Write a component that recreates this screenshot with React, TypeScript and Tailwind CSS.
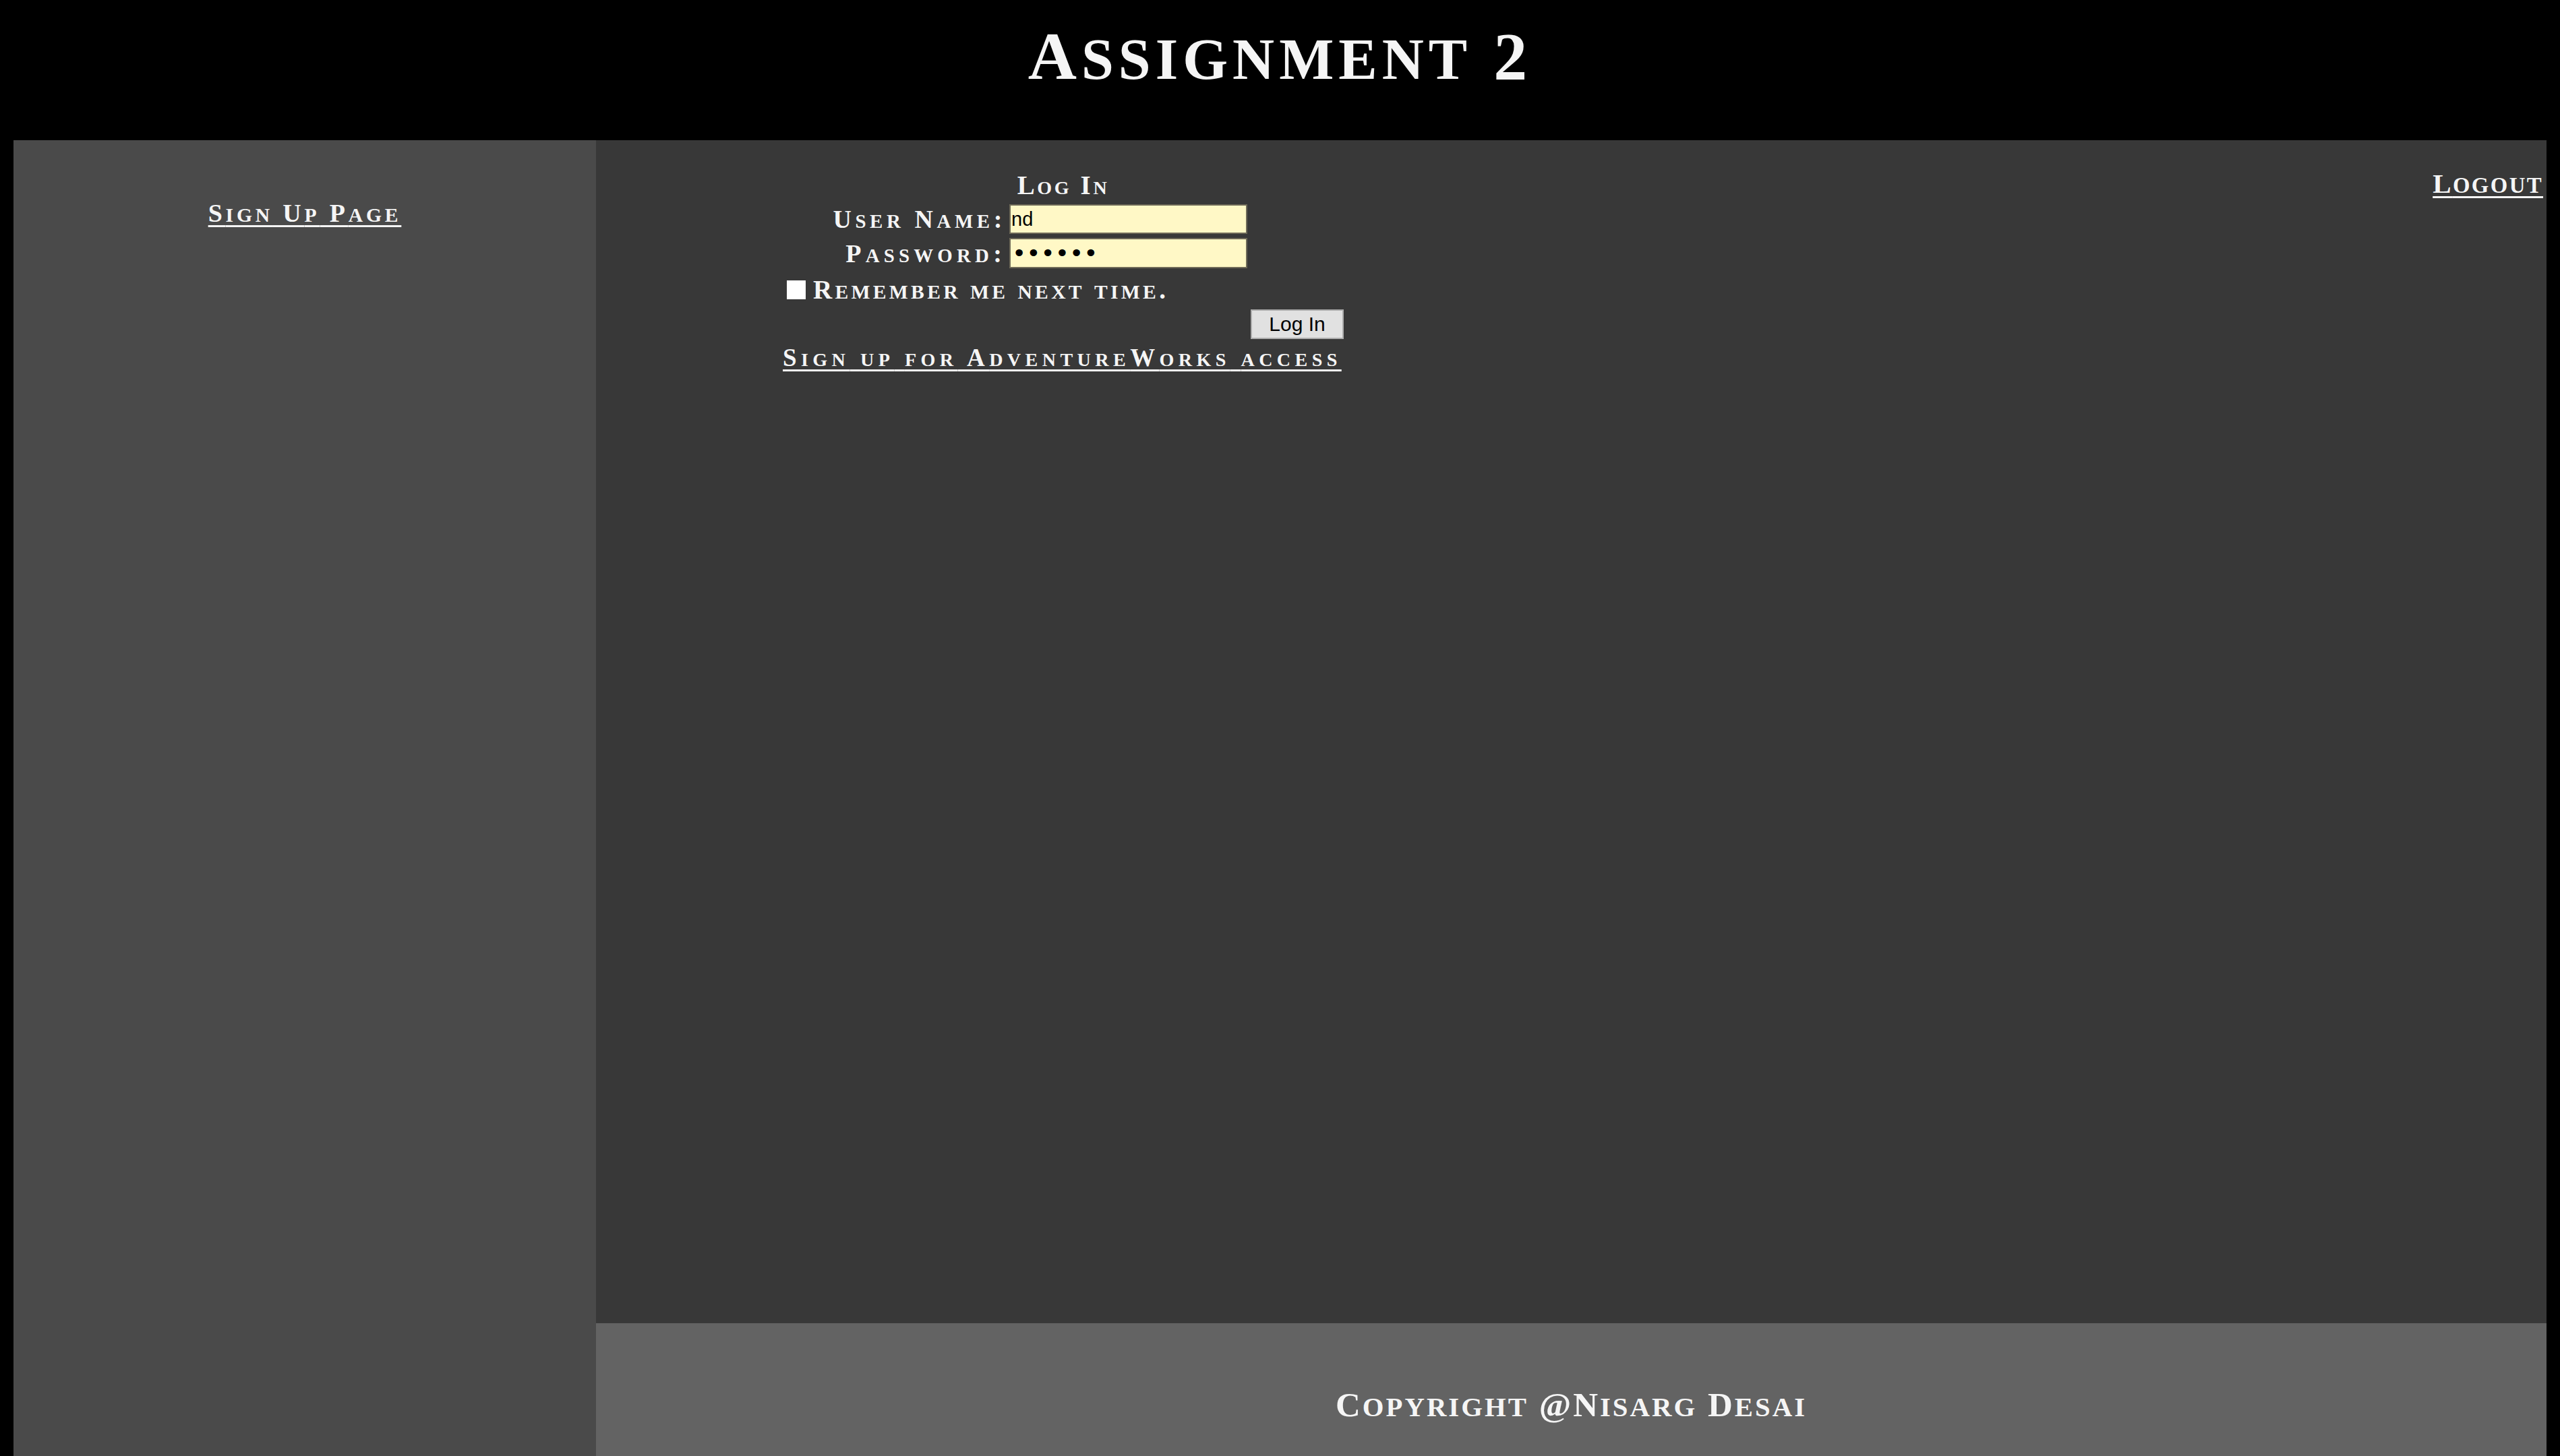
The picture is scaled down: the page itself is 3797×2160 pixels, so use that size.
import React from "react";

function SC({ text, small }: { text: string; small: string }) {
  const parts = text.match(/[a-z]+|[^a-z]+/g) || [];
  return (
    <>
      {parts.map((p, i) =>
        /[a-z]/.test(p) ? (
          <span key={i} className={"uppercase " + small}>
            {p}
          </span>
        ) : (
          <span key={i}>{p}</span>
        )
      )}
    </>
  );
}

const serif = "font-['Liberation_Serif',serif] font-bold text-[#f5f5f5]";

export default function App() {
  return (
    <div className="w-[3797px] h-[2160px] bg-black flex flex-col overflow-hidden">
      <header className="h-[208px] shrink-0 flex justify-center pt-[34px]">
        <h1 className={serif + " text-[100px] leading-none tracking-[7px]"}>
          <SC text="Assignment 2" small="text-[0.86em]" />
        </h1>
      </header>
      <div className="flex-1 flex px-[20px]">
        <aside className="w-[864px] shrink-0 bg-[#4a4a4a] flex justify-center">
          <a href="#" className={serif + " mt-[89px] text-[38px] leading-none h-fit tracking-[4.8px] underline decoration-[3px] underline-offset-[5px]"}>
            <SC text="Sign Up Page" small="text-[0.78em]" />
          </a>
        </aside>
        <main className="flex-1 flex flex-col">
          <div className="h-[1755px] shrink-0 bg-[#383838] flex items-start justify-between">
            <div className="ml-[277px] w-[832px] flex flex-col">
              <div className={serif + " mt-[47px] text-[39px] leading-none text-center tracking-[3.6px]"}>
                <SC text="Log In" small="text-[0.72em]" />
              </div>
              <div className="mt-[9px] h-[44px] flex items-center">
                <label className={serif + " w-[331px] text-right text-[38px] leading-none tracking-[5.6px]"}>
                  <SC text="User Name:" small="text-[0.76em]" />
                </label>
                <input
                  type="text"
                  defaultValue="nd"
                  className="ml-[5px] w-[353px] h-[44px] bg-[#fff8c6] border-2 border-[#6e6a58] px-[1px] font-['Liberation_Sans',sans-serif] text-[29px] text-black outline-none"
                />
              </div>
              <div className="mt-[6px] h-[45px] flex items-center">
                <label className={serif + " w-[331px] text-right text-[38px] leading-none tracking-[6.2px]"}>
                  <SC text="Password:" small="text-[0.76em]" />
                </label>
                <input
                  type="password"
                  defaultValue="123456"
                  className="ml-[5px] w-[353px] h-[45px] bg-[#fff8c6] border-2 border-[#6e6a58] px-[2px] font-['DejaVu_Sans',sans-serif] text-[36px] text-black outline-none"
                />
              </div>
              <div className="mt-[12px] h-[39px] flex items-center pl-[6px]">
                <input type="checkbox" className="appearance-none w-[28px] h-[28px] bg-white m-0" />
                <span className={serif + " ml-[11px] text-[39px] leading-none tracking-[4.3px]"}>
                  <SC text="Remember me next time." small="text-[0.76em]" />
                </span>
              </div>
              <div className="mt-[10px] h-[44px] flex justify-end">
                <button className="w-[138px] h-[44px] bg-[#e1e1e1] border-2 border-[#adadad] font-['Liberation_Sans',sans-serif] text-[30px] text-black leading-none">
                  Log In
                </button>
              </div>
              <div className="mt-[9px]">
                <a href="#" className={serif + " text-[37px] leading-none tracking-[6.4px] underline decoration-[3px] underline-offset-[5px]"}>
                  <SC text="Sign up for AdventureWorks access" small="text-[0.76em]" />
                </a>
              </div>
            </div>
            <a href="#" className={serif + " mt-[44px] mr-[5px] text-[41px] leading-none tracking-[2.4px] underline decoration-[3px] underline-offset-[5px]"}>
              <SC text="Logout" small="text-[0.8em]" />
            </a>
          </div>
          <footer className="flex-1 bg-[#636363] flex justify-center pt-[96px]">
            <p className={serif + " text-[51px] leading-none h-fit tracking-[3px]"}>
              <SC text="Copyright @Nisarg Desai" small="text-[0.8em]" />
            </p>
          </footer>
        </main>
      </div>
    </div>
  );
}
